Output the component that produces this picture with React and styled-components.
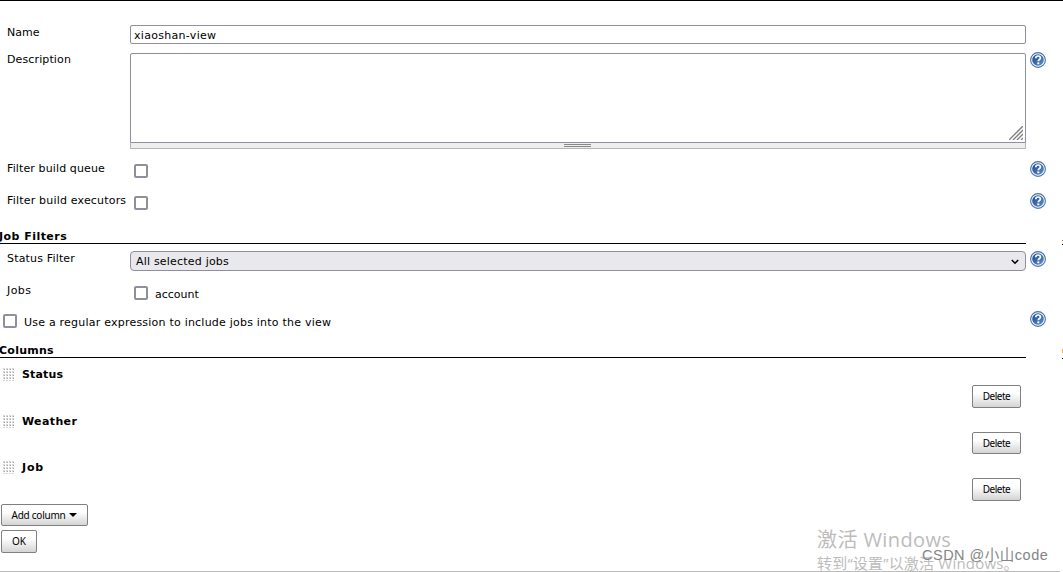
import styled, { createGlobalStyle } from "styled-components";

const columns = [
  { name: "Status", height: 47, tracking: 0.15 },
  { name: "Weather", height: 46, short: true, tracking: 0.38 },
  { name: "Job", height: 45, tracking: 0.8 },
];

const Help = () => (
  <HelpLink type="button" aria-label="Help">
    <svg width="16" height="16" viewBox="0 0 16 16">
      <defs>
        <linearGradient id="help" x1="0" y1="0" x2="1" y2="1">
          <stop offset="0" stopColor="#1d4a8c" />
          <stop offset="1" stopColor="#5f8fc6" />
        </linearGradient>
      </defs>
      <circle cx="8" cy="8" r="7.4" fill="#f4f8fc" stroke="#4872ab" strokeWidth="1.1" />
      <circle cx="8" cy="8" r="5.8" fill="url(#help)" />
      <path
        d="M5.8 6.2C5.8 4.7 6.8 4 8.1 4s2.3.8 2.3 2.1c0 1.5-2.1 1.7-2.1 3.2"
        fill="none"
        stroke="#fff"
        strokeWidth="1.7"
      />
      <rect x="7.3" y="10.4" width="2" height="1.8" fill="#fff" />
    </svg>
  </HelpLink>
);

const DragHandle = () => (
  <Handle width="12" height="13" viewBox="0 0 12 13">
    {[0, 3, 6, 9, 12].map((y) =>
      [0, 3, 6, 9].map((x) => (
        <g key={`${x}-${y}`}>
          <rect x={x} y={y} width="2" height="2" fill="#d8d8d8" />
          <rect x={x + 1} y={y + 1} width="1" height="1" fill="#a4a4a4" />
        </g>
      ))
    )}
  </Handle>
);

const App = () => {
  return (
    <>
      <GlobalStyle />
      <Page>
        <Form>
          <Row $height={27}>
            <Label>Name</Label>
            <TextInput defaultValue="xiaoshan-view" />
          </Row>
          <Row $height={109}>
            <Label $tracking={0.12}>Description</Label>
            <DescriptionField>
              <TextArea />
              <ResizeCorner width="14" height="14" viewBox="0 0 14 14">
                <path
                  d="M0 14L14 0M4 14L14 4M8 14L14 8M12 14L14 12"
                  stroke="#808080"
                  strokeWidth="1.4"
                />
              </ResizeCorner>
              <ResizeBar>
                <ResizeGrip />
              </ResizeBar>
            </DescriptionField>
            <Help />
          </Row>
          <Row $height={32}>
            <Label $tracking={0.12}>Filter build queue</Label>
            <Field>
              <Checkbox type="checkbox" />
            </Field>
            <Help />
          </Row>
          <Row $height={32}>
            <Label $tracking={0.19}>Filter build executors</Label>
            <Field>
              <Checkbox type="checkbox" />
            </Field>
            <Help />
          </Row>

          <SectionTitle $top={4} $tracking={0.46}>
            Job Filters
          </SectionTitle>
          <Row $height={32}>
            <Label $tracking={0.17}>Status Filter</Label>
            <Select type="button">
              All selected jobs
              <svg width="8" height="6" viewBox="0 0 8 6">
                <path d="M0.8 1L4 4.2L7.2 1" fill="none" stroke="#000" strokeWidth="1.6" />
              </svg>
            </Select>
            <Help />
          </Row>
          <Row $height={28}>
            <Label $tracking={0.4}>Jobs</Label>
            <Field>
              <Checkbox type="checkbox" />
              <CheckboxText>account</CheckboxText>
            </Field>
          </Row>
          <Row $height={32}>
            <Field $wide>
              <Checkbox type="checkbox" />
              <CheckboxText $tracking={0.22}>
                Use a regular expression to include jobs into the view
              </CheckboxText>
            </Field>
            <Help />
          </Row>

          <SectionTitle $tracking={0.25}>Columns</SectionTitle>
          <ColumnList>
            {columns.map(({ name, height, short, tracking }) => (
              <ColumnItem key={name} $height={height}>
                <ColumnName $tracking={tracking}>
                  <DragHandle />
                  {name}
                </ColumnName>
                <DeleteButton $width={49} $height={short ? 22 : 23} $tracking={-0.5}>
                  Delete
                </DeleteButton>
              </ColumnItem>
            ))}
          </ColumnList>
          <Actions>
            <Button $width={87} $height={22} $tracking={-0.25}>
              Add column
              <Caret />
            </Button>
            <Button $width={36} $height={23}>
              OK
            </Button>
          </Actions>
        </Form>
        <SidePanel>
          <SideMark $height={244} $gap={3}>
            <SideText $height={1} $color="#b06a20" />
          </SideMark>
          <SideMark $height={114} $gap={5}>
            <SideText $height={4} $color="#ffb45c" />
          </SideMark>
        </SidePanel>
        <Activation>
          <ActivationTitle>激活 Windows</ActivationTitle>
          <ActivationText>转到“设置”以激活 Windows。</ActivationText>
        </Activation>
        <Credit>CSDN @小山code</Credit>
      </Page>
    </>
  );
};

export default App;

const GlobalStyle = createGlobalStyle`
  * {
    box-sizing: border-box;
  }

  body {
    margin: 0;
    background: #fff;
    overflow: hidden;
  }
`;

const Page = styled.div`
  position: relative;
  display: flex;
  justify-content: space-between;
  width: 1063px;
  height: 572px;
  overflow: hidden;
  border-top: 1px solid #000;
  color: #000;
  font-family: Verdana, "DejaVu Sans", sans-serif;
  font-size: 11px;
  line-height: 14px;
`;

const Form = styled.form`
  width: 1060px;
  padding-top: 24px;
  border-bottom: 1px solid #bbb;
`;

const Row = styled.div`
  display: flex;
  align-items: flex-start;
  height: ${(props) => props.$height}px;
`;

const Label = styled.label`
  width: 130px;
  padding: 1px 0 0 7px;
  letter-spacing: ${(props) => props.$tracking || 0}px;
  white-space: nowrap;
`;

const TextInput = styled.input`
  width: 896px;
  height: 19px;
  padding: 1px 3px 0;
  border: 1px solid #8f8f9d;
  border-radius: 2px;
  outline: none;
  font: inherit;
  letter-spacing: 0.3px;
`;

const DescriptionField = styled.div`
  position: relative;
  width: 896px;
  margin-top: 1px;
`;

const TextArea = styled.textarea`
  display: block;
  width: 100%;
  height: 90px;
  border: 1px solid #8f8f9d;
  border-radius: 2px 2px 0 0;
  outline: none;
  resize: none;
`;

const ResizeCorner = styled.svg`
  position: absolute;
  right: 3px;
  top: 73px;
`;

const ResizeBar = styled.div`
  display: flex;
  justify-content: center;
  height: 6px;
  padding-right: 1px;
  border: 1px solid #b8b8b0;
  border-top: 0;
  background: #eee;
`;

const ResizeGrip = styled.div`
  width: 27px;
  height: 3px;
  margin-top: 1px;
  border: solid #888;
  border-width: 1px 0;
`;

const Field = styled.div`
  display: flex;
  align-items: flex-start;
  gap: 7px;
  width: ${(props) => (props.$wide ? 1026 : 896)}px;
  padding-top: 3px;
  padding-left: ${(props) => (props.$wide ? 3 : 4)}px;
`;

const Checkbox = styled.input`
  appearance: none;
  flex: none;
  width: 14px;
  height: 14px;
  margin: 0;
  border: 2px solid #8f8f9d;
  border-radius: 2px;
  background: #fff;
`;

const CheckboxText = styled.span`
  padding-top: 2px;
  letter-spacing: ${(props) => props.$tracking || 0}px;
`;

const HelpLink = styled.button`
  width: 16px;
  height: 16px;
  margin: 0 0 0 4px;
  padding: 0;
  border: 0;
  background: none;

  & > svg {
    display: block;
  }
`;

const SectionTitle = styled.div`
  width: 1026px;
  height: ${(props) => 15 + (props.$top || 0)}px;
  margin-bottom: ${(props) => (props.$top ? 7 : 8)}px;
  padding-top: ${(props) => props.$top || 0}px;
  border-bottom: 1px solid #000;
  font-weight: bold;
  line-height: 16px;
  letter-spacing: ${(props) => props.$tracking}px;
  text-indent: -1px;
`;

const Select = styled.button`
  display: flex;
  align-items: center;
  justify-content: space-between;
  width: 896px;
  height: 20px;
  padding: 2px 6px 0 5px;
  border: 1px solid #8f8f9d;
  border-radius: 4px;
  background: #e9e9ed;
  color: #000;
  font: inherit;
  letter-spacing: 0.2px;
`;

const ColumnList = styled.div`
  width: 1021px;
`;

const ColumnItem = styled.div`
  height: ${(props) => props.$height}px;
`;

const ColumnName = styled.div`
  display: flex;
  align-items: center;
  gap: 7px;
  height: 18px;
  margin-bottom: 1px;
  padding-left: 3px;
  font-weight: bold;
  letter-spacing: ${(props) => props.$tracking}px;
`;

const Handle = styled.svg`
  flex: none;
  margin-bottom: 1px;
`;

const Button = styled.button.attrs({ type: "button" })`
  display: flex;
  align-items: flex-start;
  justify-content: center;
  gap: 4px;
  width: ${(props) => props.$width}px;
  height: ${(props) => props.$height}px;
  padding: 4px 0 0;
  border: 1px solid #808080;
  border-radius: 2px;
  background: linear-gradient(#fff 35%, #d4d4d4);
  color: #000;
  font-family: "Noto Sans", sans-serif;
  font-size: 10px;
  line-height: 12px;
  letter-spacing: ${(props) => props.$tracking || 0}px;
  white-space: nowrap;
`;

const DeleteButton = styled(Button)`
  margin-left: auto;
`;

const Caret = styled.span`
  margin-top: 4px;
  border: solid transparent;
  border-width: 4px 4px 0;
  border-top-color: #000;
`;

const Actions = styled.div`
  display: flex;
  flex-direction: column;
  gap: 4px;
  padding: 0 1px;
`;

const SidePanel = styled.div`
  width: 1px;
`;

const SideMark = styled.div`
  display: flex;
  flex-direction: column;
  justify-content: flex-end;
  height: ${(props) => props.$height}px;
  padding-bottom: ${(props) => props.$gap}px;
  border-bottom: 1px solid #000;
`;

const SideText = styled.div`
  height: ${(props) => props.$height}px;
  background: ${(props) => props.$color};
`;

const Activation = styled.div`
  position: absolute;
  left: 817px;
  top: 525px;
  color: #bcbcbc;
  font-family: "Open Sans", "Noto Sans CJK SC", sans-serif;
  white-space: nowrap;
`;

const ActivationTitle = styled.div`
  font-size: 20px;
  line-height: 28px;
  letter-spacing: 0.4px;
`;

const ActivationText = styled.div`
  font-size: 15px;
  line-height: 18px;
  letter-spacing: 0.2px;
`;

const Credit = styled.div`
  position: absolute;
  left: 922px;
  top: 544px;
  color: #858585;
  font-family: "Liberation Sans", "Noto Sans CJK SC", sans-serif;
  font-size: 14.5px;
  line-height: 20px;
  letter-spacing: 0.5px;
  white-space: nowrap;
`;
